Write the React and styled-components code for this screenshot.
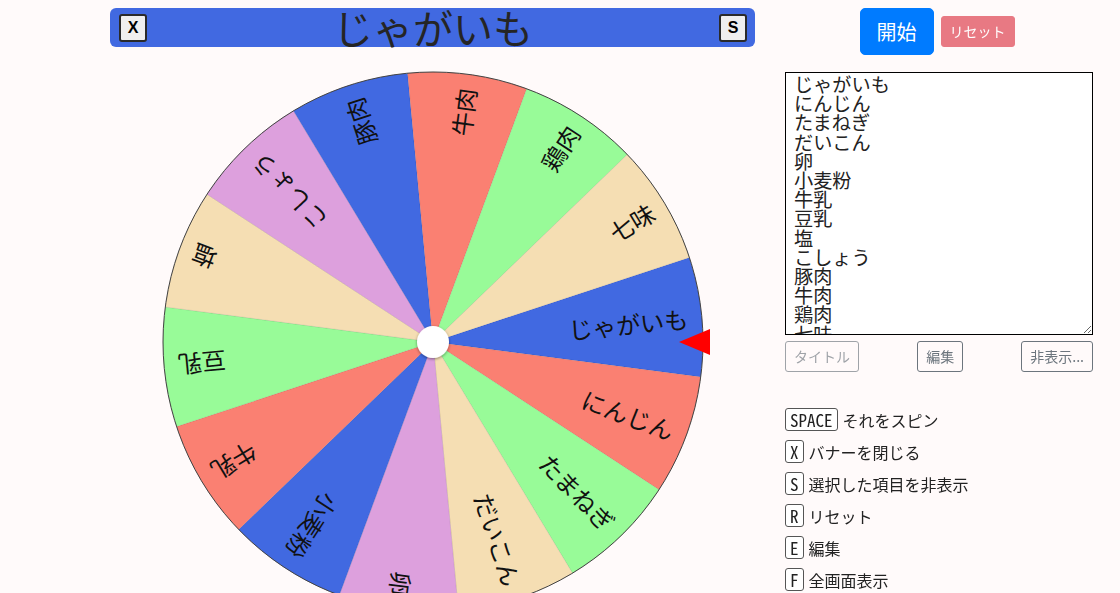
import React from "react";
import styled, { createGlobalStyle } from "styled-components";

const GlobalStyle = createGlobalStyle`
  html, body {
    margin: 0;
    padding: 0;
    background: #fffafa;
  }
  body {
    font-family: "Noto Sans CJK JP", "Noto Sans", sans-serif;
    color: #222;
  }
  html::-webkit-scrollbar {
    width: 15px;
    background: #fffafa;
  }
  html::-webkit-scrollbar-thumb {
    background: #8a8a8a;
    background-clip: padding-box;
    border-left: 6px solid transparent;
    border-radius: 6px;
  }
`;

const Page = styled.div`
  display: flex;
  align-items: flex-start;
  gap: 30px;
  padding: 8px 12px 0 110px;
  min-height: 1170px;
  box-sizing: border-box;
`;

const LeftColumn = styled.div`
  width: 645px;
  display: flex;
  flex-direction: column;
  align-items: center;
`;

const Banner = styled.div`
  width: 100%;
  height: 39px;
  background: #4169e1;
  border-radius: 6px;
  display: flex;
  align-items: center;
  justify-content: space-between;
  padding: 0 8px 0 9px;
  box-sizing: border-box;
`;

const BannerTitle = styled.div`
  font-family: "Noto Sans CJK JP", sans-serif;
  font-size: 40px;
  line-height: 39px;
  color: #252525;
  flex: 1;
  text-align: center;
`;

const BannerButton = styled.button`
  width: 28px;
  height: 28px;
  padding: 0;
  background: #efefef;
  border: 2px solid #2a2a2a;
  border-radius: 3px;
  font-family: "Liberation Sans", Arial, sans-serif;
  font-weight: bold;
  font-size: 16px;
  color: #000;
  display: flex;
  align-items: center;
  justify-content: center;
`;

const WheelSvg = styled.svg`
  display: block;
  margin-top: 15px;
  overflow: visible;
`;

const RightColumn = styled.div`
  width: 308px;
  display: flex;
  flex-direction: column;
`;

const ActionRow = styled.div`
  display: flex;
  justify-content: center;
  align-items: center;
  gap: 7px;
  padding-right: 4px;
`;

const Btn = styled.button`
  font-family: "Noto Sans CJK JP", sans-serif;
  font-size: ${(p) => (p.$large ? "20px" : "14px")};
  line-height: ${(p) => (p.$large ? "29px" : "21px")};
  padding: ${(p) => (p.$large ? "8px 16px" : "4px 8px")};
  border-radius: ${(p) => (p.$large ? "5px" : "3px")};
  border: 1px solid ${(p) => p.$border};
  background: ${(p) => p.$bg};
  color: ${(p) => p.$color};
  opacity: ${(p) => (p.$disabled ? 0.65 : 1)};
  white-space: nowrap;
  cursor: pointer;
`;

const ItemsArea = styled.textarea`
  margin-top: 17px;
  width: 308px;
  height: 263px;
  box-sizing: border-box;
  border: 1px solid #000;
  border-radius: 0;
  background: #fff;
  color: #222;
  font-family: "Noto Sans CJK JP", sans-serif;
  font-size: 19.2px;
  line-height: 19.2px;
  padding: 2px 8px;
  resize: both;
  overflow-y: scroll;
  outline: none;

  &::-webkit-scrollbar {
    width: 15px;
    background: #f8f8f8;
  }
  &::-webkit-scrollbar-thumb {
    background: #8a8a8a;
    background-clip: padding-box;
    border: 4px solid transparent;
    border-top-width: 16px;
    border-bottom-width: 16px;
    border-radius: 8px;
  }
`;

const ToolRow = styled.div`
  margin-top: 6px;
  display: flex;
  justify-content: space-between;
`;

const ShortcutList = styled.ul`
  list-style: none;
  margin: 36px 0 0;
  padding: 0;
  display: flex;
  flex-direction: column;
  gap: 9px;
`;

const ShortcutRow = styled.li`
  display: flex;
  align-items: center;
  gap: 5px;
  height: 23px;
  font-size: 16px;
  color: #222;
`;

const Key = styled.kbd`
  box-sizing: border-box;
  height: 23px;
  padding: 0 4px;
  border: 1px solid #555;
  border-radius: 3px;
  background: #fff;
  font-family: "Noto Sans Mono CJK JP", "Liberation Sans Narrow", "DejaVu Sans Condensed", monospace;
  font-size: 17px;
  line-height: 21px;
  color: #222;
`;

const ITEMS = [
  "じゃがいも",
  "にんじん",
  "たまねぎ",
  "だいこん",
  "卵",
  "小麦粉",
  "牛乳",
  "豆乳",
  "塩",
  "こしょう",
  "豚肉",
  "牛肉",
  "鶏肉",
  "七味",
];

const COLORS = ["#4169e1", "#fa8072", "#98fb98", "#f5deb3", "#dda0dd"];

const SHORTCUTS = [
  ["SPACE", "それをスピン"],
  ["X", "バナーを閉じる"],
  ["S", "選択した項目を非表示"],
  ["R", "リセット"],
  ["E", "編集"],
  ["F", "全画面表示"],
];

const R = 270;
const STEP = 360 / ITEMS.length;
const MID0 = -5.4;

const rad = (d) => (d * Math.PI) / 180;
const pt = (a, r) => [r * Math.cos(rad(a)), r * Math.sin(rad(a))];

function Wheel() {
  return (
    <WheelSvg width="560" height="560" viewBox="-280 -280 560 560">
      <defs>
        <filter id="hubShadow" x="-50%" y="-50%" width="200%" height="200%">
          <feDropShadow dx="0" dy="1" stdDeviation="1.5" floodColor="#000" floodOpacity="0.45" />
        </filter>
      </defs>
      {ITEMS.map((label, i) => {
        const mid = MID0 + i * STEP;
        const s = mid - STEP / 2;
        const e = mid + STEP / 2;
        const [x1, y1] = pt(s, R);
        const [x2, y2] = pt(e, R);
        return (
          <path
            key={"s" + i}
            d={`M0 0 L${x1} ${y1} A${R} ${R} 0 0 1 ${x2} ${y2} Z`}
            fill={COLORS[i % COLORS.length]}
            stroke="rgba(0,0,0,0.12)"
            strokeWidth="0.6"
          />
        );
      })}
      <circle cx="0" cy="0" r={R} fill="none" stroke="#444" strokeWidth="1" />
      {ITEMS.map((label, i) => {
        const mid = MID0 + i * STEP;
        return (
          <text
            key={"t" + i}
            transform={`rotate(${mid})`}
            x="256"
            y="0"
            textAnchor="end"
            dominantBaseline="central"
            fontFamily='"Noto Sans CJK JP", sans-serif'
            fontSize="24"
            fill="#111"
          >
            {label}
          </text>
        );
      })}
      <circle cx="0" cy="0" r="16" fill="#fff" filter="url(#hubShadow)" />
      <polygon points="246,0 277,-13 277,13" fill="#ff0000" />
    </WheelSvg>
  );
}

export default function App() {
  return (
    <>
      <GlobalStyle />
      <Page>
        <LeftColumn>
          <Banner>
            <BannerButton>X</BannerButton>
            <BannerTitle>じゃがいも</BannerTitle>
            <BannerButton>S</BannerButton>
          </Banner>
          <Wheel />
        </LeftColumn>
        <RightColumn>
          <ActionRow>
            <Btn $large $bg="#007bff" $border="#007bff" $color="#fff">
              開始
            </Btn>
            <Btn $bg="#dc3545" $border="#dc3545" $color="#fff" $disabled>
              リセット
            </Btn>
          </ActionRow>
          <ItemsArea defaultValue={ITEMS.join("\n") + "\n"} spellCheck={false} />
          <ToolRow>
            <Btn $bg="transparent" $border="#6c757d" $color="#6c757d" $disabled>
              タイトル
            </Btn>
            <Btn $bg="transparent" $border="#6c757d" $color="#6c757d">
              編集
            </Btn>
            <Btn $bg="transparent" $border="#6c757d" $color="#6c757d">
              非表示...
            </Btn>
          </ToolRow>
          <ShortcutList>
            {SHORTCUTS.map(([k, t]) => (
              <ShortcutRow key={k}>
                <Key>{k}</Key>
                <span>{t}</span>
              </ShortcutRow>
            ))}
          </ShortcutList>
        </RightColumn>
      </Page>
    </>
  );
}
